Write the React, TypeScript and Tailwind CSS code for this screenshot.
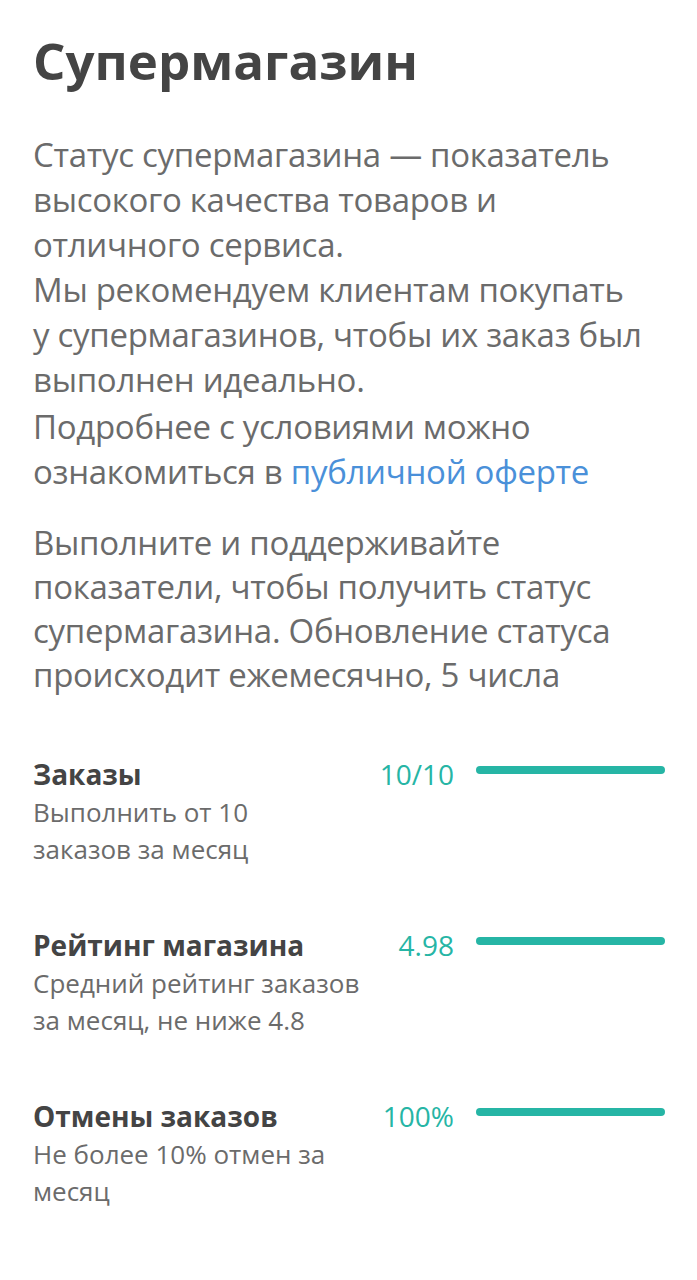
import React from "react";

const metrics = [
  { title: "Заказы", desc: ["Выполнить от 10", "заказов за месяц"], value: "10/10" },
  { title: "Рейтинг магазина", desc: ["Средний рейтинг заказов", "за месяц, не ниже 4.8"], value: "4.98" },
  { title: "Отмены заказов", desc: ["Не более 10% отмен за", "месяц"], value: "100%" },
];

export default function App() {
  return (
    <div className="min-h-[1280px] bg-white pl-[33px] pr-[32px] pt-[28px]" style={{ fontFamily: '"Open Sans", "Noto Sans", sans-serif' }}>
      <h1 className="text-[51px] font-bold leading-[64px] text-[#444444]">Супермагазин</h1>
      <div className="mt-[40px] text-[33px] leading-[45px] tracking-[-0.3px] text-[#6b6b6b]">
        <p>Статус супермагазина — показатель высокого качества товаров и отличного сервиса.</p>
        <p>Мы рекомендуем клиентам покупать у{"\u00a0"}супермагазинов, чтобы их заказ был выполнен идеально.</p>
        <p className="mt-[2px]">
          Подробнее с условиями можно ознакомиться в <span className="text-[#4a90d9]">публичной оферте</span>
        </p>
        <p className="mt-[27px] leading-[44px]">
          Выполните и поддерживайте показатели, чтобы получить статус супермагазина. Обновление статуса происходит ежемесячно, 5{"\u00a0"}числа
        </p>
      </div>
      <div className="mt-[59px] flex flex-col gap-[59px]">
        {metrics.map((m) => (
          <div key={m.title} className="flex items-start">
            <div className="w-[340px] shrink-0">
              <div className="text-[28px] font-bold leading-[36px] text-[#444444]">{m.title}</div>
              <div className="mt-[2px] text-[26px] leading-[37px] text-[#6b6b6b]">
                {m.desc[0]}
                <br />
                {m.desc[1]}
              </div>
            </div>
            <div className="flex-1 text-right text-[28px] leading-[36px] text-[#26b5a5]">{m.value}</div>
            <div className="ml-[22px] mt-[10px] h-[8px] w-[189px] shrink-0 rounded-full bg-[#26b5a5]" />
          </div>
        ))}
      </div>
    </div>
  );
}
